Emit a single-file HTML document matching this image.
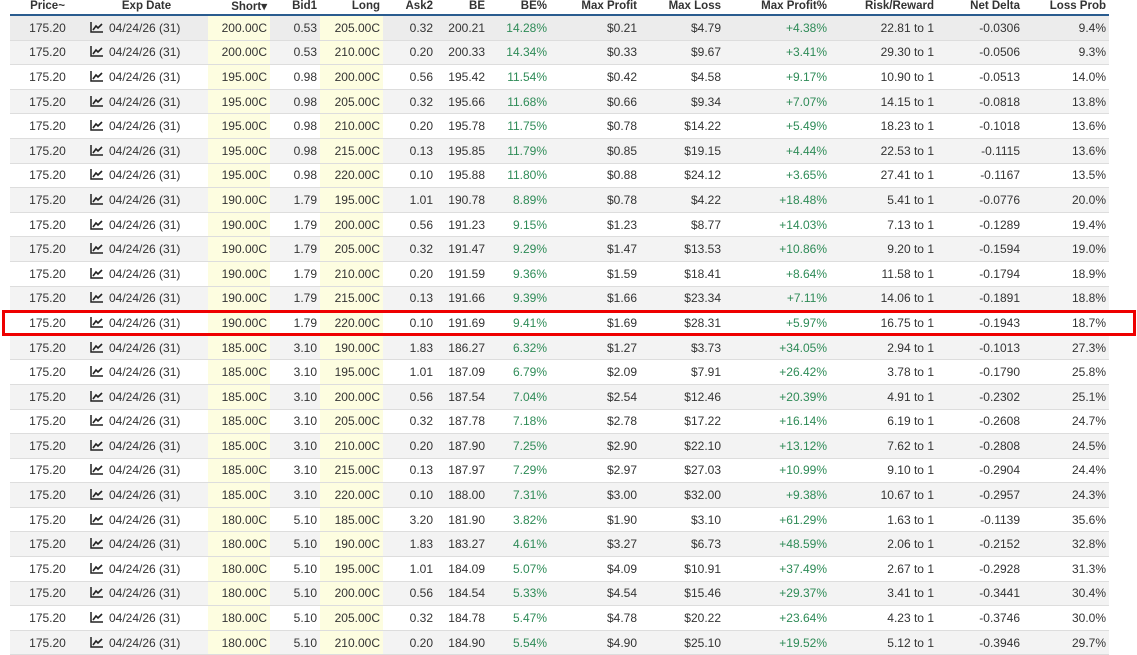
<!DOCTYPE html>
<html><head><meta charset="utf-8"><style>
body{margin:0;width:1137px;height:643px;overflow:hidden;background:#fff;font-family:"Liberation Sans",sans-serif;}
table{position:absolute;left:10px;top:-3px;border-collapse:collapse;table-layout:fixed;width:1099px;}
th{font-size:11.5px;font-weight:bold;color:#333;height:17px;padding:0 3px;border-bottom:2px solid #2a5c8f;text-align:right;white-space:nowrap;}
td{font-size:12px;color:#333;height:23.6px;padding:0 3px;text-align:right;border-bottom:1px solid #ddd;white-space:nowrap;}
tbody tr:nth-child(even) td{background:#f3f3f3;}
tbody tr:first-child td{background:#ececec;}
td.y,tbody tr td.y{background:#fdfde0 !important;}
td.g{color:#2e8b57;}
td.c{text-align:center;}
td.e{text-align:left;padding-left:5px;}
.ic{display:inline-block;width:13px;height:11px;vertical-align:-1px;margin-right:6px;}
#box{position:absolute;left:2px;top:310px;width:1128px;height:20px;border:3px solid #e00;}
</style></head><body>
<table>
<colgroup><col style="width:75px"><col style="width:123px"><col style="width:62px"><col style="width:50px"><col style="width:63px"><col style="width:53px"><col style="width:52px"><col style="width:62px"><col style="width:90px"><col style="width:84px"><col style="width:106px"><col style="width:107px"><col style="width:86px"><col style="width:86px"></colgroup>
<thead><tr><th style="text-align:center">Price~</th><th style="text-align:center">Exp Date</th><th>Short▾</th><th>Bid1</th><th>Long</th><th>Ask2</th><th>BE</th><th>BE%</th><th>Max Profit</th><th>Max Loss</th><th>Max Profit%</th><th>Risk/Reward</th><th>Net Delta</th><th>Loss Prob</th></tr></thead>
<tbody>
<tr><td class="c">175.20</td><td class="e"><svg class="ic" viewBox="0 0 13 11"><path d="M1 0V10H13" stroke="#222" stroke-width="1.5" fill="none"/><path d="M3 8L6 4L8 6L12 2" stroke="#222" stroke-width="1.6" fill="none"/></svg>04/24/26 (31)</td><td class="y">200.00C</td><td>0.53</td><td class="y">205.00C</td><td>0.32</td><td>200.21</td><td class="g">14.28%</td><td>$0.21</td><td>$4.79</td><td class="g">+4.38%</td><td>22.81 to 1</td><td>-0.0306</td><td>9.4%</td></tr>
<tr><td class="c">175.20</td><td class="e"><svg class="ic" viewBox="0 0 13 11"><path d="M1 0V10H13" stroke="#222" stroke-width="1.5" fill="none"/><path d="M3 8L6 4L8 6L12 2" stroke="#222" stroke-width="1.6" fill="none"/></svg>04/24/26 (31)</td><td class="y">200.00C</td><td>0.53</td><td class="y">210.00C</td><td>0.20</td><td>200.33</td><td class="g">14.34%</td><td>$0.33</td><td>$9.67</td><td class="g">+3.41%</td><td>29.30 to 1</td><td>-0.0506</td><td>9.3%</td></tr>
<tr><td class="c">175.20</td><td class="e"><svg class="ic" viewBox="0 0 13 11"><path d="M1 0V10H13" stroke="#222" stroke-width="1.5" fill="none"/><path d="M3 8L6 4L8 6L12 2" stroke="#222" stroke-width="1.6" fill="none"/></svg>04/24/26 (31)</td><td class="y">195.00C</td><td>0.98</td><td class="y">200.00C</td><td>0.56</td><td>195.42</td><td class="g">11.54%</td><td>$0.42</td><td>$4.58</td><td class="g">+9.17%</td><td>10.90 to 1</td><td>-0.0513</td><td>14.0%</td></tr>
<tr><td class="c">175.20</td><td class="e"><svg class="ic" viewBox="0 0 13 11"><path d="M1 0V10H13" stroke="#222" stroke-width="1.5" fill="none"/><path d="M3 8L6 4L8 6L12 2" stroke="#222" stroke-width="1.6" fill="none"/></svg>04/24/26 (31)</td><td class="y">195.00C</td><td>0.98</td><td class="y">205.00C</td><td>0.32</td><td>195.66</td><td class="g">11.68%</td><td>$0.66</td><td>$9.34</td><td class="g">+7.07%</td><td>14.15 to 1</td><td>-0.0818</td><td>13.8%</td></tr>
<tr><td class="c">175.20</td><td class="e"><svg class="ic" viewBox="0 0 13 11"><path d="M1 0V10H13" stroke="#222" stroke-width="1.5" fill="none"/><path d="M3 8L6 4L8 6L12 2" stroke="#222" stroke-width="1.6" fill="none"/></svg>04/24/26 (31)</td><td class="y">195.00C</td><td>0.98</td><td class="y">210.00C</td><td>0.20</td><td>195.78</td><td class="g">11.75%</td><td>$0.78</td><td>$14.22</td><td class="g">+5.49%</td><td>18.23 to 1</td><td>-0.1018</td><td>13.6%</td></tr>
<tr><td class="c">175.20</td><td class="e"><svg class="ic" viewBox="0 0 13 11"><path d="M1 0V10H13" stroke="#222" stroke-width="1.5" fill="none"/><path d="M3 8L6 4L8 6L12 2" stroke="#222" stroke-width="1.6" fill="none"/></svg>04/24/26 (31)</td><td class="y">195.00C</td><td>0.98</td><td class="y">215.00C</td><td>0.13</td><td>195.85</td><td class="g">11.79%</td><td>$0.85</td><td>$19.15</td><td class="g">+4.44%</td><td>22.53 to 1</td><td>-0.1115</td><td>13.6%</td></tr>
<tr><td class="c">175.20</td><td class="e"><svg class="ic" viewBox="0 0 13 11"><path d="M1 0V10H13" stroke="#222" stroke-width="1.5" fill="none"/><path d="M3 8L6 4L8 6L12 2" stroke="#222" stroke-width="1.6" fill="none"/></svg>04/24/26 (31)</td><td class="y">195.00C</td><td>0.98</td><td class="y">220.00C</td><td>0.10</td><td>195.88</td><td class="g">11.80%</td><td>$0.88</td><td>$24.12</td><td class="g">+3.65%</td><td>27.41 to 1</td><td>-0.1167</td><td>13.5%</td></tr>
<tr><td class="c">175.20</td><td class="e"><svg class="ic" viewBox="0 0 13 11"><path d="M1 0V10H13" stroke="#222" stroke-width="1.5" fill="none"/><path d="M3 8L6 4L8 6L12 2" stroke="#222" stroke-width="1.6" fill="none"/></svg>04/24/26 (31)</td><td class="y">190.00C</td><td>1.79</td><td class="y">195.00C</td><td>1.01</td><td>190.78</td><td class="g">8.89%</td><td>$0.78</td><td>$4.22</td><td class="g">+18.48%</td><td>5.41 to 1</td><td>-0.0776</td><td>20.0%</td></tr>
<tr><td class="c">175.20</td><td class="e"><svg class="ic" viewBox="0 0 13 11"><path d="M1 0V10H13" stroke="#222" stroke-width="1.5" fill="none"/><path d="M3 8L6 4L8 6L12 2" stroke="#222" stroke-width="1.6" fill="none"/></svg>04/24/26 (31)</td><td class="y">190.00C</td><td>1.79</td><td class="y">200.00C</td><td>0.56</td><td>191.23</td><td class="g">9.15%</td><td>$1.23</td><td>$8.77</td><td class="g">+14.03%</td><td>7.13 to 1</td><td>-0.1289</td><td>19.4%</td></tr>
<tr><td class="c">175.20</td><td class="e"><svg class="ic" viewBox="0 0 13 11"><path d="M1 0V10H13" stroke="#222" stroke-width="1.5" fill="none"/><path d="M3 8L6 4L8 6L12 2" stroke="#222" stroke-width="1.6" fill="none"/></svg>04/24/26 (31)</td><td class="y">190.00C</td><td>1.79</td><td class="y">205.00C</td><td>0.32</td><td>191.47</td><td class="g">9.29%</td><td>$1.47</td><td>$13.53</td><td class="g">+10.86%</td><td>9.20 to 1</td><td>-0.1594</td><td>19.0%</td></tr>
<tr><td class="c">175.20</td><td class="e"><svg class="ic" viewBox="0 0 13 11"><path d="M1 0V10H13" stroke="#222" stroke-width="1.5" fill="none"/><path d="M3 8L6 4L8 6L12 2" stroke="#222" stroke-width="1.6" fill="none"/></svg>04/24/26 (31)</td><td class="y">190.00C</td><td>1.79</td><td class="y">210.00C</td><td>0.20</td><td>191.59</td><td class="g">9.36%</td><td>$1.59</td><td>$18.41</td><td class="g">+8.64%</td><td>11.58 to 1</td><td>-0.1794</td><td>18.9%</td></tr>
<tr><td class="c">175.20</td><td class="e"><svg class="ic" viewBox="0 0 13 11"><path d="M1 0V10H13" stroke="#222" stroke-width="1.5" fill="none"/><path d="M3 8L6 4L8 6L12 2" stroke="#222" stroke-width="1.6" fill="none"/></svg>04/24/26 (31)</td><td class="y">190.00C</td><td>1.79</td><td class="y">215.00C</td><td>0.13</td><td>191.66</td><td class="g">9.39%</td><td>$1.66</td><td>$23.34</td><td class="g">+7.11%</td><td>14.06 to 1</td><td>-0.1891</td><td>18.8%</td></tr>
<tr><td class="c">175.20</td><td class="e"><svg class="ic" viewBox="0 0 13 11"><path d="M1 0V10H13" stroke="#222" stroke-width="1.5" fill="none"/><path d="M3 8L6 4L8 6L12 2" stroke="#222" stroke-width="1.6" fill="none"/></svg>04/24/26 (31)</td><td class="y">190.00C</td><td>1.79</td><td class="y">220.00C</td><td>0.10</td><td>191.69</td><td class="g">9.41%</td><td>$1.69</td><td>$28.31</td><td class="g">+5.97%</td><td>16.75 to 1</td><td>-0.1943</td><td>18.7%</td></tr>
<tr><td class="c">175.20</td><td class="e"><svg class="ic" viewBox="0 0 13 11"><path d="M1 0V10H13" stroke="#222" stroke-width="1.5" fill="none"/><path d="M3 8L6 4L8 6L12 2" stroke="#222" stroke-width="1.6" fill="none"/></svg>04/24/26 (31)</td><td class="y">185.00C</td><td>3.10</td><td class="y">190.00C</td><td>1.83</td><td>186.27</td><td class="g">6.32%</td><td>$1.27</td><td>$3.73</td><td class="g">+34.05%</td><td>2.94 to 1</td><td>-0.1013</td><td>27.3%</td></tr>
<tr><td class="c">175.20</td><td class="e"><svg class="ic" viewBox="0 0 13 11"><path d="M1 0V10H13" stroke="#222" stroke-width="1.5" fill="none"/><path d="M3 8L6 4L8 6L12 2" stroke="#222" stroke-width="1.6" fill="none"/></svg>04/24/26 (31)</td><td class="y">185.00C</td><td>3.10</td><td class="y">195.00C</td><td>1.01</td><td>187.09</td><td class="g">6.79%</td><td>$2.09</td><td>$7.91</td><td class="g">+26.42%</td><td>3.78 to 1</td><td>-0.1790</td><td>25.8%</td></tr>
<tr><td class="c">175.20</td><td class="e"><svg class="ic" viewBox="0 0 13 11"><path d="M1 0V10H13" stroke="#222" stroke-width="1.5" fill="none"/><path d="M3 8L6 4L8 6L12 2" stroke="#222" stroke-width="1.6" fill="none"/></svg>04/24/26 (31)</td><td class="y">185.00C</td><td>3.10</td><td class="y">200.00C</td><td>0.56</td><td>187.54</td><td class="g">7.04%</td><td>$2.54</td><td>$12.46</td><td class="g">+20.39%</td><td>4.91 to 1</td><td>-0.2302</td><td>25.1%</td></tr>
<tr><td class="c">175.20</td><td class="e"><svg class="ic" viewBox="0 0 13 11"><path d="M1 0V10H13" stroke="#222" stroke-width="1.5" fill="none"/><path d="M3 8L6 4L8 6L12 2" stroke="#222" stroke-width="1.6" fill="none"/></svg>04/24/26 (31)</td><td class="y">185.00C</td><td>3.10</td><td class="y">205.00C</td><td>0.32</td><td>187.78</td><td class="g">7.18%</td><td>$2.78</td><td>$17.22</td><td class="g">+16.14%</td><td>6.19 to 1</td><td>-0.2608</td><td>24.7%</td></tr>
<tr><td class="c">175.20</td><td class="e"><svg class="ic" viewBox="0 0 13 11"><path d="M1 0V10H13" stroke="#222" stroke-width="1.5" fill="none"/><path d="M3 8L6 4L8 6L12 2" stroke="#222" stroke-width="1.6" fill="none"/></svg>04/24/26 (31)</td><td class="y">185.00C</td><td>3.10</td><td class="y">210.00C</td><td>0.20</td><td>187.90</td><td class="g">7.25%</td><td>$2.90</td><td>$22.10</td><td class="g">+13.12%</td><td>7.62 to 1</td><td>-0.2808</td><td>24.5%</td></tr>
<tr><td class="c">175.20</td><td class="e"><svg class="ic" viewBox="0 0 13 11"><path d="M1 0V10H13" stroke="#222" stroke-width="1.5" fill="none"/><path d="M3 8L6 4L8 6L12 2" stroke="#222" stroke-width="1.6" fill="none"/></svg>04/24/26 (31)</td><td class="y">185.00C</td><td>3.10</td><td class="y">215.00C</td><td>0.13</td><td>187.97</td><td class="g">7.29%</td><td>$2.97</td><td>$27.03</td><td class="g">+10.99%</td><td>9.10 to 1</td><td>-0.2904</td><td>24.4%</td></tr>
<tr><td class="c">175.20</td><td class="e"><svg class="ic" viewBox="0 0 13 11"><path d="M1 0V10H13" stroke="#222" stroke-width="1.5" fill="none"/><path d="M3 8L6 4L8 6L12 2" stroke="#222" stroke-width="1.6" fill="none"/></svg>04/24/26 (31)</td><td class="y">185.00C</td><td>3.10</td><td class="y">220.00C</td><td>0.10</td><td>188.00</td><td class="g">7.31%</td><td>$3.00</td><td>$32.00</td><td class="g">+9.38%</td><td>10.67 to 1</td><td>-0.2957</td><td>24.3%</td></tr>
<tr><td class="c">175.20</td><td class="e"><svg class="ic" viewBox="0 0 13 11"><path d="M1 0V10H13" stroke="#222" stroke-width="1.5" fill="none"/><path d="M3 8L6 4L8 6L12 2" stroke="#222" stroke-width="1.6" fill="none"/></svg>04/24/26 (31)</td><td class="y">180.00C</td><td>5.10</td><td class="y">185.00C</td><td>3.20</td><td>181.90</td><td class="g">3.82%</td><td>$1.90</td><td>$3.10</td><td class="g">+61.29%</td><td>1.63 to 1</td><td>-0.1139</td><td>35.6%</td></tr>
<tr><td class="c">175.20</td><td class="e"><svg class="ic" viewBox="0 0 13 11"><path d="M1 0V10H13" stroke="#222" stroke-width="1.5" fill="none"/><path d="M3 8L6 4L8 6L12 2" stroke="#222" stroke-width="1.6" fill="none"/></svg>04/24/26 (31)</td><td class="y">180.00C</td><td>5.10</td><td class="y">190.00C</td><td>1.83</td><td>183.27</td><td class="g">4.61%</td><td>$3.27</td><td>$6.73</td><td class="g">+48.59%</td><td>2.06 to 1</td><td>-0.2152</td><td>32.8%</td></tr>
<tr><td class="c">175.20</td><td class="e"><svg class="ic" viewBox="0 0 13 11"><path d="M1 0V10H13" stroke="#222" stroke-width="1.5" fill="none"/><path d="M3 8L6 4L8 6L12 2" stroke="#222" stroke-width="1.6" fill="none"/></svg>04/24/26 (31)</td><td class="y">180.00C</td><td>5.10</td><td class="y">195.00C</td><td>1.01</td><td>184.09</td><td class="g">5.07%</td><td>$4.09</td><td>$10.91</td><td class="g">+37.49%</td><td>2.67 to 1</td><td>-0.2928</td><td>31.3%</td></tr>
<tr><td class="c">175.20</td><td class="e"><svg class="ic" viewBox="0 0 13 11"><path d="M1 0V10H13" stroke="#222" stroke-width="1.5" fill="none"/><path d="M3 8L6 4L8 6L12 2" stroke="#222" stroke-width="1.6" fill="none"/></svg>04/24/26 (31)</td><td class="y">180.00C</td><td>5.10</td><td class="y">200.00C</td><td>0.56</td><td>184.54</td><td class="g">5.33%</td><td>$4.54</td><td>$15.46</td><td class="g">+29.37%</td><td>3.41 to 1</td><td>-0.3441</td><td>30.4%</td></tr>
<tr><td class="c">175.20</td><td class="e"><svg class="ic" viewBox="0 0 13 11"><path d="M1 0V10H13" stroke="#222" stroke-width="1.5" fill="none"/><path d="M3 8L6 4L8 6L12 2" stroke="#222" stroke-width="1.6" fill="none"/></svg>04/24/26 (31)</td><td class="y">180.00C</td><td>5.10</td><td class="y">205.00C</td><td>0.32</td><td>184.78</td><td class="g">5.47%</td><td>$4.78</td><td>$20.22</td><td class="g">+23.64%</td><td>4.23 to 1</td><td>-0.3746</td><td>30.0%</td></tr>
<tr><td class="c">175.20</td><td class="e"><svg class="ic" viewBox="0 0 13 11"><path d="M1 0V10H13" stroke="#222" stroke-width="1.5" fill="none"/><path d="M3 8L6 4L8 6L12 2" stroke="#222" stroke-width="1.6" fill="none"/></svg>04/24/26 (31)</td><td class="y">180.00C</td><td>5.10</td><td class="y">210.00C</td><td>0.20</td><td>184.90</td><td class="g">5.54%</td><td>$4.90</td><td>$25.10</td><td class="g">+19.52%</td><td>5.12 to 1</td><td>-0.3946</td><td>29.7%</td></tr>
</tbody></table>
<div id="box"></div>
</body></html>
